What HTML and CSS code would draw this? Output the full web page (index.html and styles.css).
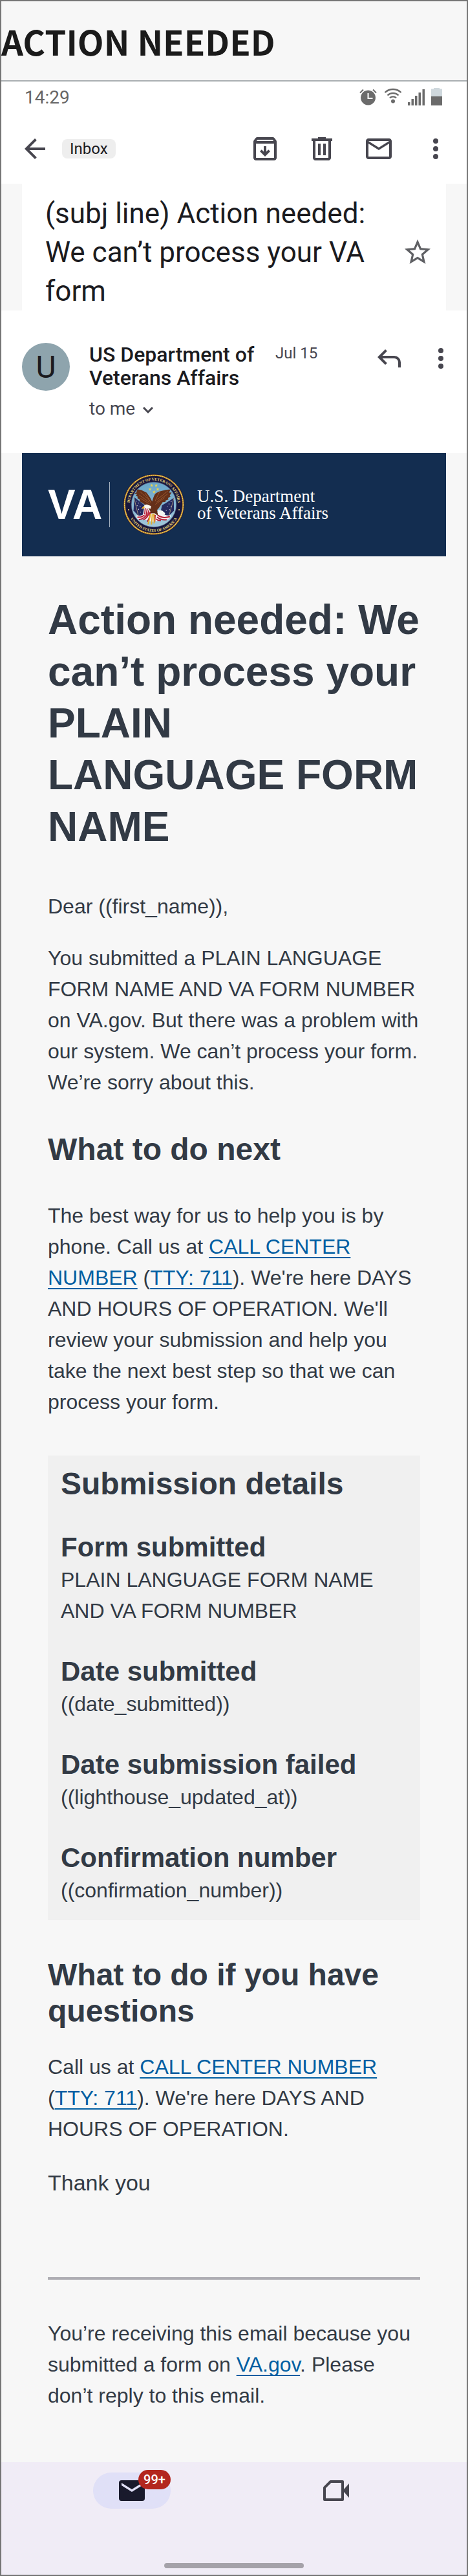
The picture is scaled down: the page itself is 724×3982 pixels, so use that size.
FILE: index.html
```html
<!DOCTYPE html>
<html lang="en">
<head>
<meta charset="utf-8">
<meta name="viewport" content="width=device-width, initial-scale=1">
<title>Action needed</title>
<link rel="stylesheet" href="styles.css">
</head>
<body>
<div class="frame">
  <header class="board">
    <p class="board-title">ACTION NEEDED</p>
  </header>

  <div class="status">
    <span>14:29</span>
    <svg class="status-icons" viewBox="0 0 130 28" aria-hidden="true">
      <g fill="#6b6b6b">
        <path fill-rule="evenodd" d="M13.500 3.500a11.500 11.500 0 1 0 .01 0zM12.500 8h2v7h6v2h-8z"/>
        <path d="M1 7.500 6 2.500M26 7.500 21 2.500" stroke="#6b6b6b" stroke-width="2" fill="none"/>
        <circle cx="52" cy="20.500" r="3"/>
        <path d="M39.500 7a18 18 0 0 1 25 0M43.500 11.500a12 12 0 0 1 17 0M47 15.500a7 7 0 0 1 10 0" stroke="#6b6b6b" stroke-width="2.400" fill="none"/>
        <path d="M75 22h3.500v5H75zM80.500 17H84v10h-3.500zM86 12h3.500v15H86zM91.500 7H95v20h-3.500zM97.500 2h3.500v25h-3.500z"/>
        <path fill="#cfd8dd" d="M115 0h9v1.500h4V14h-17V1.500h4z"/>
        <path d="M111 13h17v14h-17z"/>
      </g>
    </svg>
  </div>

  <div class="toolbar">
    <button class="icon-button" aria-label="Back"><svg viewBox="0 0 24 24"><path d="M20 11H7.830l5.590-5.590L12 4l-8 8 8 8 1.410-1.410L7.830 13H20z"/></svg></button>
    <span class="chip">Inbox</span>
    <div class="actions">
      <button class="icon-button" aria-label="Archive"><svg viewBox="0 0 24 24"><path fill-rule="evenodd" d="M20.540 5.230l-1.390-1.680C18.880 3.210 18.470 3 18 3H6c-.47 0-.88.21-1.160.55L3.460 5.230C3.170 5.570 3 6.020 3 6.500V19c0 1.100.9 2 2 2h14c1.100 0 2-.9 2-2V6.500c0-.48-.17-.93-.46-1.270zM6.240 5h11.520l.83 1H5.420zM5 19V8h14v11zM12 18l4-4-1.400-1.400-1.600 1.600V10h-2v4.200l-1.600-1.600L8 14z"/></svg></button>
      <button class="icon-button" aria-label="Delete"><svg viewBox="0 0 24 24"><path fill-rule="evenodd" d="M7 21q-.825 0-1.412-.587T5 19V6H4V4h5V3h6v1h5v2h-1v13q0 .825-.587 1.413T17 21zM17 6H7v13h10zM9 17h2V8H9zm4 0h2V8h-2z"/></svg></button>
      <button class="icon-button" aria-label="Mark as unread"><svg viewBox="0 0 24 24"><path fill-rule="evenodd" d="M22 6c0-1.100-.9-2-2-2H4c-1.100 0-2 .9-2 2v12c0 1.100.9 2 2 2h16c1.100 0 2-.9 2-2zm-2 0l-8 5-8-5zm0 12H4V8l8 5 8-5z"/></svg></button>
      <button class="icon-button" aria-label="More options"><svg viewBox="0 0 24 24"><circle cx="12" cy="6" r="2"/><circle cx="12" cy="12" r="2"/><circle cx="12" cy="18" r="2"/></svg></button>
    </div>
  </div>

  <div class="subject-band">
    <div class="subject">
      <h1 class="subject-text">(subj line) Action needed: We can’t process your VA form</h1>
      <button class="icon-button star" aria-label="Star"><svg viewBox="0 0 24 24"><path fill-rule="evenodd" d="M22 9.240l-7.190-.62L12 2 9.190 8.630 2 9.240l5.460 4.730L5.820 21 12 17.270 18.180 21l-1.630-7.030zM12 15.400l-3.760 2.270 1-4.280-3.320-2.880 4.380-.38L12 6.100l1.710 4.040 4.380.38-3.320 2.880 1 4.280z"/></svg></button>
    </div>
  </div>

  <div class="sender">
    <div class="avatar">U</div>
    <div class="sender-info">
      <div class="sender-name">US Department of Veterans Affairs</div>
      <button class="recipient">to me <svg viewBox="0 0 16 10" aria-hidden="true"><path d="M1 1l7 7 7-7" fill="none" stroke="currentColor" stroke-width="3"/></svg></button>
    </div>
    <span class="date">Jul 15</span>
    <div class="sender-actions">
      <button class="icon-button" aria-label="Reply"><svg viewBox="0 0 24 24"><path d="M19 19v-4q0-1.250-.875-2.125T16 12H6.825l3.600 3.600L9 17l-6-6 6-6 1.425 1.400-3.600 3.600H16q2.075 0 3.538 1.463T21 15v4z"/></svg></button>
      <button class="icon-button" aria-label="Message options"><svg viewBox="0 0 24 24"><circle cx="12" cy="6" r="2"/><circle cx="12" cy="12" r="2"/><circle cx="12" cy="18" r="2"/></svg></button>
    </div>
  </div>

  <main class="email">
    <div class="banner">
      <span class="va">VA</span>
      <span class="rule"></span>
      <svg class="seal" viewBox="58 64 290 290" role="img" aria-label="Department of Veterans Affairs seal">
        <defs>
          <path id="arc-top" d="M90.500 209a112.500 112.500 0 0 1 225 0"/>
          <path id="arc-bottom" d="M76 209a127 127 0 0 0 254 0"/>
          <linearGradient id="sky" x1="0" y1="0" x2="0" y2="1"><stop offset="0" stop-color="#68a5c8"/><stop offset="1" stop-color="#a3c8db"/></linearGradient>
          <clipPath id="disc"><circle cx="203" cy="209" r="104"/></clipPath>
        </defs>
        <circle cx="203" cy="209" r="143" fill="#17173d"/>
        <circle cx="203" cy="209" r="137" fill="none" stroke="#ad7829" stroke-width="7"/>
        <circle cx="203" cy="209" r="137" fill="none" stroke="#efcf58" stroke-width="4" stroke-dasharray="6 3"/>
        <circle cx="203" cy="209" r="105" fill="url(#sky)" stroke="#5d6587" stroke-width="2"/>
        <g class="seal-text">
          <text><textPath href="#arc-top" startOffset="50%">DEPARTMENT OF VETERANS AFFAIRS</textPath></text>
          <text><textPath href="#arc-bottom" startOffset="50%">UNITED STATES OF AMERICA</textPath></text>
        </g>
        <circle cx="85" cy="233" r="3" fill="#e9d678"/><circle cx="321" cy="233" r="3" fill="#e9d678"/>
        <g fill="#f0d54a">
          <path id="s" d="M193 112l2 5h6l-5 4 2 6-5-4-5 4 2-6-5-4h6z"/>
          <use href="#s" x="21"/><use href="#s" x="-8" y="18"/><use href="#s" x="28" y="18"/><use href="#s" x="11" y="30"/>
        </g>
        <g clip-path="url(#disc)">
          <path d="M112 175l49 38-2 45-28 4-23-25z" fill="#252a5f"/>
          <path d="M296 178l-55 35-8 38 37 14 27-27z" fill="#252a5f"/>
          <path d="M110 176l22 90M297 178l-24 86" stroke="#d8b880" stroke-width="2"/>
          <g fill="#e6e9f4"><circle cx="121" cy="193" r="2"/><circle cx="131" cy="202" r="2"/><circle cx="125" cy="214" r="2"/><circle cx="139" cy="216" r="2"/><circle cx="132" cy="231" r="2"/><circle cx="147" cy="227" r="2"/><circle cx="141" cy="244" r="2"/><circle cx="284" cy="195" r="2"/><circle cx="274" cy="206" r="2"/><circle cx="284" cy="217" r="2"/><circle cx="266" cy="219" r="2"/><circle cx="277" cy="233" r="2"/><circle cx="261" cy="236" r="2"/></g>
          <path d="M122 258q22 12 45-17l20-5 30 10 26 5q20 12 40 8-5 22-25 20-18-4-28 1-28 18-65 1-18-10-31-3-14-1-12-20z" fill="#f3f2f2"/>
          <path d="M126 267q22 6 43-20M133 279q25-2 43-31M154 280q20-8 28-36M172 289q12-15 15-47M221 258q24 18 57 7M218 267q20 16 45 12M214 276q10 9 22 7M207 289l2-32" fill="none" stroke="#b71d36" stroke-width="6"/>
          <path d="M159 214q19 1 27 25l-14 20-20-2z" fill="#f3f2f2"/>
          <path d="M163 225l-3 30M172 228l-5 32M180 235l-7 25" stroke="#b71d36" stroke-width="5"/>
          <path d="M188 252l-12 49M196 253l-4 49M203 251l2 46" stroke="#e4ae2c" stroke-width="6"/>
          <path d="M184 223l18-2 18 18 2 21-16-11-18 1z" fill="#5d2b17"/>
          <path d="M126 137l18 4 25 12 16 22 10 20q5-20 12-33 12-18 74-24l-7 15 12-1-9 15 4 4-12 8 3 6-14 5-1 7-13 1-17 26-14 16-14 9-15-13-11-17-22-17-13-7-2-10-10-6 2-7-9-4 5-7-13-5 10-3z" fill="#653019"/>
          <path d="M139 149l47 44M134 164l48 34M141 180l42 26M162 155l27 45M269 145l-50 40M268 159l-52 38M253 177l-43 31M232 145l-23 47" fill="none" stroke="#9a5930" stroke-width="3"/>
          <path d="M153 223q3-14 17-15l20 8-2 13-17-5z" fill="#fbfbf4"/>
          <path d="M156 216l-8 7 3 8 10-10z" fill="#eeb32f"/>
          <path d="M222 235l20 2 14 12-3 8-20-3-14-8z" fill="#f4f5f2"/>
        </g>
      </svg>
      <span class="agency">U.S. Department<br>of Veterans Affairs</span>
    </div>

    <article class="content">
      <h2 class="headline">Action needed: We can’t process your PLAIN<br>LANGUAGE FORM NAME</h2>
      <p class="greeting">Dear ((first_name)),</p>
      <p class="intro">You submitted a PLAIN LANGUAGE FORM NAME AND VA FORM NUMBER on VA.gov. But there was a problem with our system. We can’t process your form. We’re sorry about this.</p>
      <h3 class="section-title next">What to do next</h3>
      <p>The best way for us to help you is by phone. Call us at <a href="#call">CALL CENTER NUMBER</a> (<a href="#tty">TTY: 711</a>). We're here DAYS AND HOURS OF OPERATION. We'll review your submission and help you take the next best step so that we can process your form.</p>

      <section class="details">
        <h3 class="section-title">Submission details</h3>
        <div class="detail"><h4>Form submitted</h4><p>PLAIN LANGUAGE FORM NAME AND VA FORM NUMBER</p></div>
        <div class="detail"><h4>Date submitted</h4><p>((date_submitted))</p></div>
        <div class="detail"><h4>Date submission failed</h4><p>((lighthouse_updated_at))</p></div>
        <div class="detail"><h4>Confirmation number</h4><p>((confirmation_number))</p></div>
      </section>

      <h3 class="section-title questions">What to do if you have questions</h3>
      <p>Call us at <a href="#call">CALL CENTER NUMBER</a> (<a href="#tty">TTY: 711</a>). We're here DAYS AND HOURS OF OPERATION.</p>
      <p class="thanks">Thank you</p>
      <hr>
      <p>You’re receiving this email because you submitted a form on <a href="#va">VA.gov</a>. Please don’t reply to this email.</p>
    </article>
  </main>

  <nav class="bottom-nav" aria-label="Apps">
    <div class="tabs">
      <button class="tab active" aria-label="Mail, 99+ unread">
        <svg viewBox="0 0 24 24"><path fill-rule="evenodd" d="M4 4h16q2 0 2 2v12q0 2-2 2H4q-2 0-2-2V6q0-2 2-2zm8 9 8-5V6l-8 5-8-5v2z"/></svg>
        <span class="badge">99+</span>
      </button>
      <button class="tab" aria-label="Meet">
        <svg viewBox="0 0 24 24"><path d="M3 19V9.700L7.700 5H17v14z" fill="none" stroke="currentColor" stroke-width="2" stroke-linejoin="round"/><path d="M18 11l4-4.500v11L18 13z"/></svg>
      </button>
    </div>
    <div class="home-indicator"></div>
  </nav>
</div>
</body>
</html>
```
FILE: styles.css
```css
* { box-sizing: border-box; }

body, h1, h2, h3, h4, p { margin: 0; }

body { background: #fff; }

button {
  margin: 0;
  padding: 0;
  border: 0;
  background: none;
  color: inherit;
  font: inherit;
}

svg { display: block; fill: currentColor; }

.frame {
  border: 2px solid #757575;
  background: #fff;
  color: #47464f;
  font-family: Roboto, sans-serif;
}

.board {
  padding: 22px 0;
  border-bottom: 2px solid #a9aeb1;
  background: #f7f7f7;
}

.board-title {
  color: #1b1b1b;
  font: 700 53px/78px "Noto Sans CJK SC", sans-serif;
}

.status {
  display: flex;
  align-items: center;
  justify-content: space-between;
  height: 48px;
  padding: 0 36px;
  color: #666;
  font-size: 28px;
}

.status-icons { width: 130px; height: 28px; }

.toolbar {
  display: flex;
  align-items: center;
  gap: 18px;
  padding: 32px 24px 30px 28px;
}

.icon-button { flex: none; width: 48px; height: 48px; }

.chip {
  padding: 0 12px;
  border-radius: 8px;
  background: #eee;
  color: #1b1b1f;
  font-size: 24px;
  line-height: 30px;
}

.actions { display: flex; gap: 40px; margin-left: auto; }

.subject-band { padding: 0 32px; background: #f7f7f7; }

.subject {
  display: flex;
  align-items: center;
  justify-content: space-between;
  padding: 16px 20px 0 36px;
  background: #fff;
}

.subject-text {
  color: #1b1b1f;
  font-size: 44px;
  font-weight: 400;
  line-height: 60px;
}

.star { color: #5f6064; }

.sender {
  display: flex;
  align-items: flex-start;
  padding: 50px 16px 50px 32px;
}

.avatar {
  flex: none;
  width: 74px;
  height: 74px;
  border-radius: 50%;
  background: #8ea4ad;
  color: #1b1b1f;
  font-size: 48px;
  line-height: 76px;
  text-align: center;
}

.sender-info { width: 264px; margin: 0 24px 0 30px; }

.sender-name {
  color: #1b1b1f;
  font-size: 32px;
  font-weight: 500;
  line-height: 36px;
}

.recipient {
  display: flex;
  align-items: center;
  gap: 12px;
  margin-top: 12px;
  font-size: 28px;
  line-height: 36px;
}

.recipient svg { width: 16px; height: 10px; margin-top: 4px; }

.date { font-size: 24px; line-height: 32px; }

.sender-actions { display: flex; gap: 32px; margin-left: auto; }

.email {
  background: #f7f7f7;
  color: #323a45;
  font-family: "Liberation Sans", Arial, sans-serif;
  font-size: 32px;
  line-height: 48px;
}

.banner {
  display: flex;
  align-items: center;
  height: 160px;
  margin: 0 32px;
  padding-left: 40px;
  background: #132d50;
  color: #fff;
}

.va {
  width: 79px;
  font: 700 64px/72px "Liberation Sans", Arial, sans-serif;
}

.rule { width: 1px; height: 70px; margin: 0 20px 0 16px; background: #a4afbd; }

.seal { flex: none; width: 96px; height: 96px; }

.seal-text {
  fill: #e9d678;
  font: 700 18px "Liberation Serif", serif;
  text-anchor: middle;
}

.agency {
  margin-left: 19px;
  font: 27px/26px "Liberation Serif", serif;
}

.content { padding: 58px 72px 79px; }

.headline { font-size: 64px; line-height: 80px; }

.greeting { margin-top: 59px; }

.intro { margin-top: 32px; }

.section-title { font-size: 48px; line-height: 56px; }

.next { margin: 52px 0 50px; }

.content a {
  color: #005ea2;
  text-decoration-thickness: 2px;
  text-underline-offset: 5px;
  text-decoration-skip-ink: none;
}

.details {
  margin-top: 59px;
  padding: 16px 20px 22px;
  background: #f0f0f0;
}

.detail { margin-top: 44px; }

.detail h4 { font-size: 42px; line-height: 52px; }

.questions { margin: 57px 0 34px; }

.thanks { margin-top: 35px; font-size: 34px; }

hr {
  height: 4px;
  margin: 122px 0 59px;
  border: 0;
  background: #aeadb3;
}

.bottom-nav { padding: 16px 44px 10px; background: #f0ecf6; }

.tabs {
  display: grid;
  grid-template-columns: 1fr 1fr;
  justify-items: center;
}

.tab {
  position: relative;
  display: grid;
  place-items: center;
  width: 120px;
  height: 56px;
  border-radius: 28px;
}

.tab svg { width: 48px; height: 48px; }

.active { background: #e0e0f7; color: #191a2c; }

.badge {
  position: absolute;
  top: -4px;
  right: 0;
  width: 50px;
  border-radius: 15px;
  background: #b3261e;
  color: #fff;
  font-size: 20px;
  font-weight: 500;
  line-height: 30px;
  text-align: center;
}

.home-indicator {
  width: 216px;
  height: 8px;
  margin: 84px auto 0;
  border-radius: 4px;
  background: #a5a2a9;
}
```
